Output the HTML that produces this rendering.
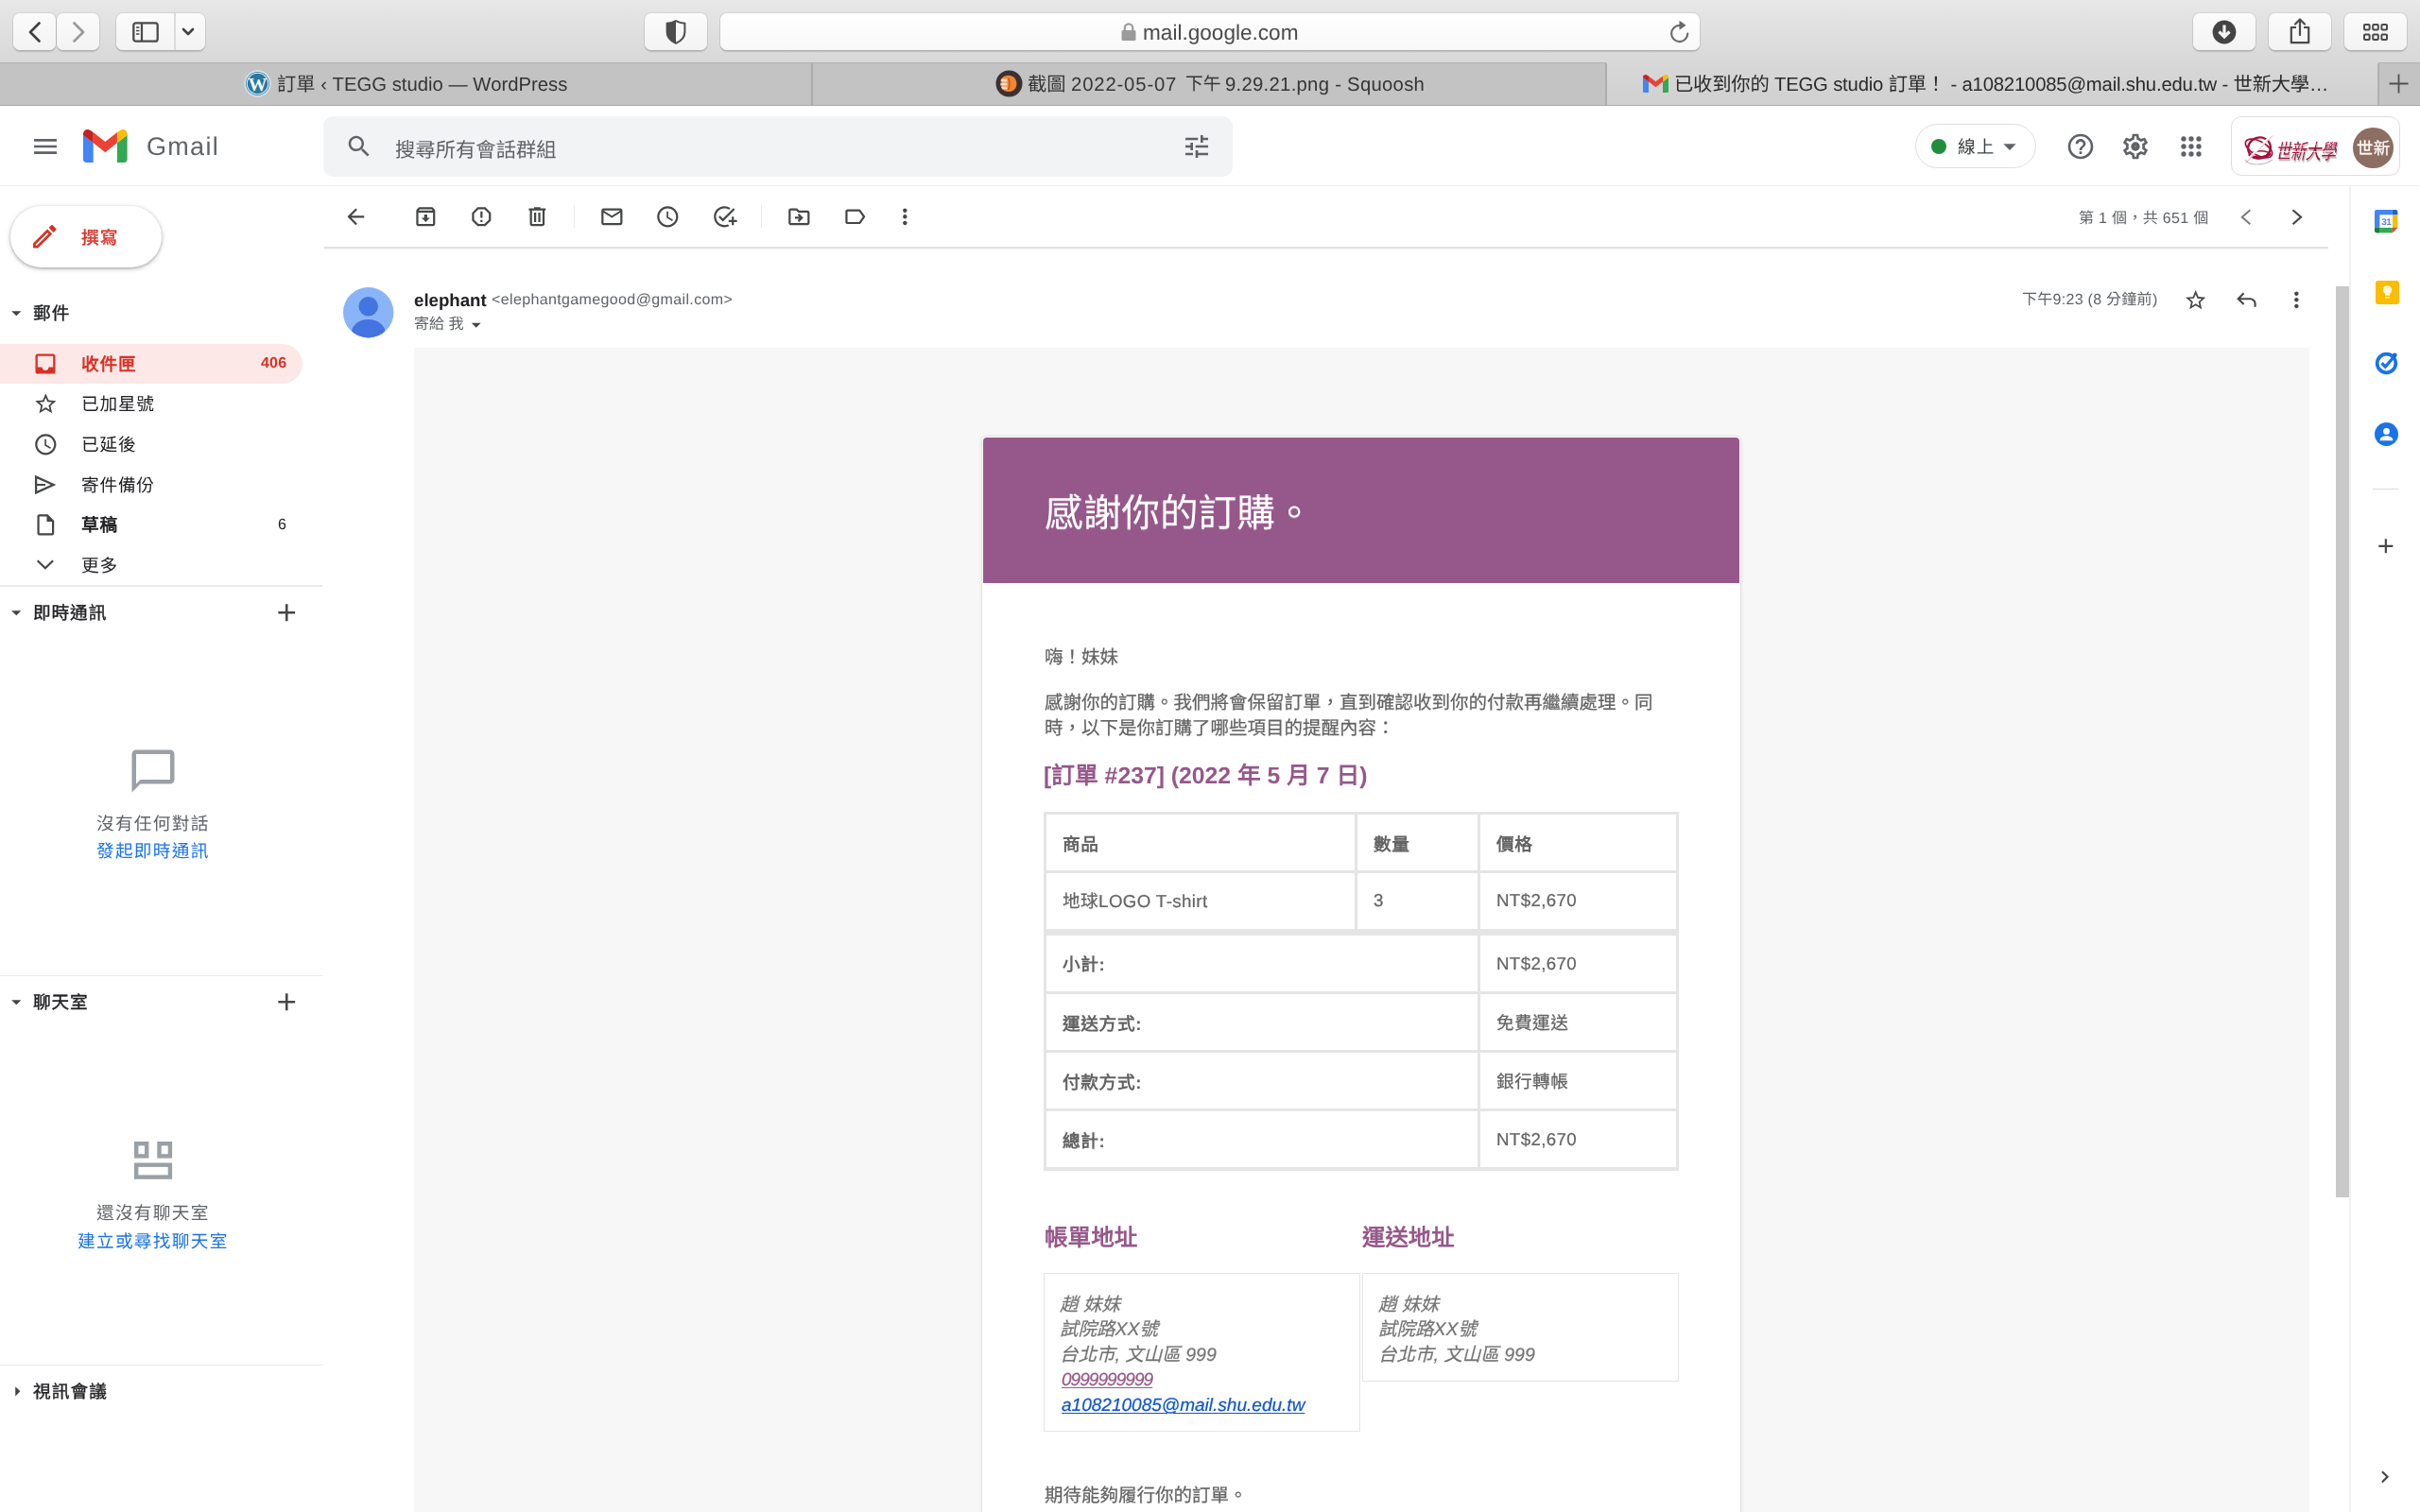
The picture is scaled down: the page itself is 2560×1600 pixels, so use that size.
<!DOCTYPE html>
<html lang="zh-TW">
<head>
<meta charset="utf-8">
<title>Gmail</title>
<style>
*{box-sizing:border-box;margin:0;padding:0}
html,body{width:2560px;height:1600px;overflow:hidden;background:#fff}
body{position:relative;font-family:"Liberation Sans",sans-serif;color:#202124;-webkit-font-smoothing:antialiased;text-rendering:geometricPrecision}
.a{position:absolute}
.t{position:absolute;white-space:nowrap;line-height:1;will-change:transform}
svg{position:absolute;display:block;overflow:visible}
/* ---------- Safari chrome ---------- */
#tb{left:0;top:0;width:2560px;height:67px;background:linear-gradient(#e9e9e9,#e4e4e4 20%,#d8d8d8)}
.btn{position:absolute;top:14px;height:39px;border-radius:7px;background:linear-gradient(#fbfbfb,#f3f3f3);box-shadow:0 0 0 1px rgba(0,0,0,.07),0 1.5px 1.5px rgba(0,0,0,.14)}
#tabs{left:0;top:66px;width:2560px;height:46px;background:#c3c3c3;border-top:1.5px solid #b3b3b3;border-bottom:1.5px solid #a9a9a9}
.tabt{font-size:20.3px;color:#353535;top:79.6px}
#tabact{left:1699px;top:66px;width:817px;height:45px;background:linear-gradient(#d8d8d8,#d0d0d0)}
</style>
</head>
<body>
<!-- ================= SAFARI TOOLBAR ================= -->
<div id="tb" class="a"></div>
<div class="btn" style="left:14px;width:45px"></div>
<div class="btn" style="left:60px;width:45px"></div>
<div class="btn" style="left:123px;width:94px"></div>
<div class="a" style="left:184px;top:14px;width:1.5px;height:39px;background:#dcdcdc"></div>
<div class="btn" style="left:682px;width:66px"></div>
<div class="btn" style="left:762px;width:1036px;background:linear-gradient(#fff,#f8f8f8)"></div>
<div class="btn" style="left:2320px;width:66px"></div>
<div class="btn" style="left:2400px;width:66px"></div>
<div class="btn" style="left:2480px;width:66px"></div>
<!-- toolbar icons -->
<svg style="left:29px;top:22px" width="16" height="24" viewBox="0 0 16 24"><path d="M12.5 2.5 3 12l9.500 9.500" fill="none" stroke="#404040" stroke-width="2.7" stroke-linecap="round" stroke-linejoin="round"/></svg>
<svg style="left:75px;top:22px" width="16" height="24" viewBox="0 0 16 24"><path d="M3.500 2.500 13 12l-9.500 9.500" fill="none" stroke="#9a9a9a" stroke-width="2.700" stroke-linecap="round" stroke-linejoin="round"/></svg>
<svg style="left:140px;top:23px" width="28" height="22" viewBox="0 0 28 22"><rect x="1.300" y="1.300" width="25.400" height="19.400" rx="2.500" fill="none" stroke="#4a4a4a" stroke-width="2.300"/><path d="M10 1.500v19" stroke="#4a4a4a" stroke-width="2.200"/><path d="M4 6h3.500M4 9.500h3.500M4 13h3.500" stroke="#4a4a4a" stroke-width="1.600"/></svg>
<svg style="left:192px;top:29px" width="14" height="10" viewBox="0 0 14 10"><path d="M2 2l5 5 5-5" fill="none" stroke="#404040" stroke-width="2.600" stroke-linecap="round" stroke-linejoin="round"/></svg>
<!-- shield -->
<svg style="left:704px;top:21px" width="22" height="26" viewBox="0 0 22 26"><path d="M11 1.200C7.500 3 4 3.600 1.600 3.800V13c0 6 4.400 9.600 9.400 11.800 5-2.200 9.400-5.800 9.400-11.800V3.800C18 3.600 14.500 3 11 1.200z" fill="none" stroke="#4d4d4d" stroke-width="2"/><path d="M11 1.200C7.500 3 4 3.600 1.600 3.800V13c0 6 4.400 9.600 9.400 11.800z" fill="#4d4d4d"/></svg>
<!-- lock + url -->
<svg style="left:1186px;top:24px" width="16" height="19" viewBox="0 0 16 19"><rect x="0.500" y="8" width="15" height="11" rx="1.500" fill="#9b9b9b"/><path d="M3.800 8.500V5.500a4.200 4.200 0 0 1 8.400 0v3" fill="none" stroke="#9b9b9b" stroke-width="2.200"/></svg>
<div class="t" style="left:1209px;top:24.3px;font-size:22.6px;color:#4a4a4a">mail.google.com</div>
<!-- reload -->
<svg style="left:1765px;top:21px" width="24" height="26" viewBox="0 0 24 26"><path d="M20.300 14.500a8.600 8.600 0 1 1-8.600-8.600" fill="none" stroke="#6a6a6a" stroke-width="2.100" stroke-linecap="round"/><path d="M11.500 0.800l7 5-7 5z" fill="#6a6a6a"/></svg>
<!-- download -->
<svg style="left:2340px;top:21px" width="26" height="26" viewBox="0 0 26 26"><circle cx="13" cy="13" r="12.400" fill="#444"/><path d="M13 5.500v12M7.500 12.500 13 18l5.500-5.500" fill="none" stroke="#f4f4f4" stroke-width="3.200" stroke-linejoin="miter"/></svg>
<!-- share -->
<svg style="left:2422px;top:19px" width="22" height="28" viewBox="0 0 22 28"><path d="M7 10H1.800v16.200h18.400V10H15" fill="none" stroke="#4a4a4a" stroke-width="2.200" stroke-linejoin="round"/><path d="M11 18V2M6 6.500l5-5 5 5" fill="none" stroke="#4a4a4a" stroke-width="2.200" stroke-linecap="round" stroke-linejoin="round"/></svg>
<!-- grid -->
<svg style="left:2500px;top:25px" width="26" height="18" viewBox="0 0 26 18"><g fill="none" stroke="#4a4a4a" stroke-width="2"><rect x="1" y="1" width="5.600" height="5.600" rx="1"/><rect x="10.200" y="1" width="5.600" height="5.600" rx="1"/><rect x="19.400" y="1" width="5.600" height="5.600" rx="1"/><rect x="1" y="11.400" width="5.600" height="5.600" rx="1"/><rect x="10.200" y="11.400" width="5.600" height="5.600" rx="1"/><rect x="19.400" y="11.400" width="5.600" height="5.600" rx="1"/></g></svg>

<!-- ================= TAB BAR ================= -->
<div id="tabs" class="a"></div>
<div class="a" style="left:858px;top:67px;width:1.500px;height:44px;background:#ababab"></div>
<div id="tabact" class="a"></div>
<div class="a" style="left:1697.500px;top:67px;width:2px;height:44px;background:#adadad"></div>
<div class="a" style="left:2515px;top:67px;width:1.500px;height:44px;background:#b0b0b0"></div>
<!-- wp icon -->
<svg style="left:257.500px;top:73.800px" width="29" height="29" viewBox="0 0 29 29"><circle cx="14.500" cy="14.500" r="14.200" fill="#d4e3ec"/><circle cx="14.500" cy="14.500" r="12.500" fill="#2a779f"/><circle cx="14.500" cy="14.500" r="11.200" fill="none" stroke="#e8f0f5" stroke-width="1.100"/><text x="14.500" y="21.800" font-family="Liberation Serif,serif" font-weight="bold" font-size="20" text-anchor="middle" fill="#f2f7fa">W</text></svg>
<div class="t tabt" style="left:293px">訂單 ‹ TEGG studio — WordPress</div>
<!-- squoosh icon -->
<svg style="left:1053px;top:74px" width="29" height="29" viewBox="0 0 29 29"><circle cx="14.500" cy="14.500" r="14" fill="#3b3033"/><path d="M7 8.500c3-3.500 11-4 14 1s1.500 12.500-5.500 13.500c-4.500.5-8-1.500-9-5z" fill="#f0862e"/><path d="M6 9.500h6.500v3H5.500zM5.500 13.500h7v3H5.200zM6 17.500h6.500v3H7z" fill="#f6d9c8"/><path d="M13.500 9c2 2 2 9 0 12" stroke="#c4561c" stroke-width="1.400" fill="none"/></svg>
<div class="t tabt" style="left:1087.200px">截圖</div><div class="t tabt" style="left:1133px;letter-spacing:.85px">2022-05-07</div><div class="t tabt" style="left:1254.200px;font-size:18.800px;top:80.300px">下午</div><div class="t tabt" style="left:1295.600px;letter-spacing:.28px">9.29.21.png - Squoosh</div>
<!-- gmail mini icon -->
<svg style="left:1738px;top:79px" width="27" height="19" viewBox="0 0 27 19"><path d="M0 3v14.500c0 .8.700 1.500 1.500 1.500H6V7.500z" fill="#4285f4"/><path d="M27 3v14.500c0 .8-.700 1.500-1.500 1.500H21V7.500z" fill="#34a853"/><path d="M21 1.500V7.500l6-4.500V2.500c0-2.300-2.600-3.300-4.200-2.100z" fill="#fbbc04"/><path d="M6 7.500V1.500l7.500 5.700L21 1.500v6l-7.500 5.700z" fill="#ea4335"/><path d="M0 2.500V3l6 4.500V1.500L4.200.400C2.600-.800 0 .200 0 2.500z" fill="#c5221f"/></svg>
<div class="t tabt" style="left:1771px;letter-spacing:-.18px;color:#2a2a2a">已收到你的 TEGG studio 訂單！ - a108210085@mail.shu.edu.tw - 世新大學…</div>
<svg style="left:2527px;top:78px" width="21" height="21" viewBox="0 0 21 21"><path d="M10.500 0.500v20M0.500 10.500h20" stroke="#505050" stroke-width="1.800"/></svg>

<!-- ================= GMAIL HEADER ================= -->
<div class="a" style="left:0.00px;top:196.00px;width:2560.00px;height:1.40px;background:#f0f0f0"></div>
<svg style="left:31.85px;top:138.85px" width="32.00" height="32.00" viewBox="0 0 24 24"><path fill="#5f6368" d="M3 18h18v-2H3v2zm0-5h18v-2H3v2zm0-7v2h18V6H3z"/></svg>
<svg style="left:87.9px;top:137.1px" width="46.6" height="34.9" viewBox="0 0 27 19.500" preserveAspectRatio="none"><path d="M0 3.200v14.500c0 1 .800 1.800 1.800 1.800H6.200V8z" fill="#4285f4"/><path d="M27 3.200v14.500c0 1-.800 1.800-1.800 1.800H20.800V8z" fill="#34a853"/><path d="M20.800 1.700V8l6.200-4.700V2.700c0-2.300-2.600-3.500-4.400-2.200z" fill="#fbbc04"/><path d="M6.200 8V1.700l7.300 5.500 7.300-5.500V8l-7.300 5.500z" fill="#ea4335"/><path d="M0 2.700v.6L6.200 8V1.700L4.400.500C2.600-.800 0 .400 0 2.700z" fill="#c5221f"/></svg>
<div class="t " style="left:154.90px;top:141.90px;font-size:27.00px;color:#5f6368;letter-spacing:1.3px">Gmail</div>
<div class="a" style="left:341.70px;top:123.20px;width:962.70px;height:63.50px;background:#f1f3f4;border-radius:10.7px"></div>
<svg style="left:365.10px;top:140.10px" width="30.00" height="30.00" viewBox="0 0 24 24"><path fill="#5f6368" d="M15.5 14h-.79l-.28-.27C15.41 12.59 16 11.11 16 9.5 16 5.91 13.09 3 9.5 3S3 5.910 3 9.500 5.910 16 9.500 16c1.610 0 3.090-.590 4.230-1.570l.27.28v.79l5 4.990L20.490 19l-4.990-5zm-6 0C7.010 14 5 11.990 5 9.500S7.010 5 9.500 5 14 7.010 14 9.500 11.990 14 9.500 14z"/></svg>
<div class="t " style="left:417.80px;top:148.90px;font-size:21.33px;color:#5f6368;">搜尋所有會話群組</div>
<svg style="left:1249.80px;top:139.00px" width="32.00" height="32.00" viewBox="0 0 24 24"><path fill="#5f6368" d="M3 17v2h6v-2H3zM3 5v2h10V5H3zm10 16v-2h8v-2h-8v-2h-2v6h2zM7 9v2H3v2h4v2h2V9H7zm14 4v-2H11v2h10zm-6-4h2V7h4V5h-4V3h-2v6z"/></svg>
<div class="a" style="left:2026.10px;top:131.00px;width:128.40px;height:47.10px;border:1.7px solid #dddee2;border-radius:24px"></div>
<div class="a" style="left:2043.40px;top:147.10px;width:16.00px;height:16.00px;background:#1e8e3e;border-radius:50%"></div>
<div class="t " style="left:2070.60px;top:147.20px;font-size:18.67px;color:#3c4043;letter-spacing:1px">線上</div>
<svg style="left:2110.40px;top:139.20px" width="32.00" height="32.00" viewBox="0 0 24 24"><path fill="#5f6368" d="M7 10l5 5 5-5z"/></svg>
<svg style="left:2184.80px;top:139.10px" width="32.00" height="32.00" viewBox="0 0 24 24"><path fill="#5f6368" d="M11 18h2v-2h-2v2zm1-16C6.480 2 2 6.480 2 12s4.480 10 10 10 10-4.480 10-10S17.520 2 12 2zm0 18c-4.410 0-8-3.590-8-8s3.590-8 8-8 8 3.590 8 8-3.590 8-8 8zm0-14c-2.210 0-4 1.790-4 4h2c0-1.100.9-2 2-2s2 .9 2 2c0 2-3 1.750-3 5h2c0-2.250 3-2.500 3-5 0-2.210-1.790-4-4-4z"/></svg>
<svg style="left:2243.20px;top:139.00px" width="32.00" height="32.00" viewBox="0 0 24 24"><path fill="#5f6368" d="M19.430 12.980c.04-.32.07-.64.07-.98 0-.34-.03-.66-.07-.98l2.110-1.650c.19-.15.24-.42.12-.64l-2-3.460c-.09-.16-.26-.25-.44-.25-.06 0-.12.01-.17.03l-2.490 1c-.52-.4-1.080-.73-1.690-.98l-.38-2.650C14.460 2.180 14.250 2 14 2h-4c-.25 0-.46.18-.49.42l-.38 2.650c-.61.25-1.170.59-1.690.98l-2.490-1c-.06-.02-.12-.03-.18-.03-.17 0-.34.09-.43.25l-2 3.460c-.13.22-.07.49.12.64l2.110 1.650c-.04.32-.07.65-.07.98 0 .33.03.66.07.98l-2.110 1.650c-.19.15-.24.42-.12.64l2 3.460c.09.16.26.25.44.25.06 0 .12-.01.17-.03l2.490-1c.52.4 1.080.73 1.690.98l.38 2.650c.03.24.24.42.49.42h4c.25 0 .46-.18.49-.42l.38-2.650c.61-.25 1.170-.59 1.690-.98l2.490 1c.06.02.12.03.18.03.17 0 .34-.09.43-.25l2-3.460c.12-.22.07-.49-.12-.64l-2.110-1.650zm-1.980-1.710c.04.31.05.52.05.73 0 .21-.02.43-.05.73l-.14 1.130.89.7 1.080.84-.7 1.210-1.270-.51-1.040-.42-.9.68c-.43.32-.84.56-1.250.73l-1.060.43-.16 1.130-.2 1.350h-1.400l-.19-1.350-.16-1.130-1.060-.43c-.43-.18-.83-.41-1.230-.71l-.91-.7-1.060.43-1.270.51-.7-1.210 1.080-.84.89-.7-.14-1.130c-.03-.31-.05-.54-.05-.74s.02-.43.05-.73l.14-1.130-.89-.7-1.080-.84.7-1.210 1.270.51 1.040.42.9-.68c.43-.32.84-.56 1.250-.73l1.060-.43.16-1.130.2-1.350h1.390l.19 1.350.16 1.130 1.060.43c.43.18.83.41 1.230.71l.91.7 1.060-.43 1.270-.51.7 1.210-1.070.85-.89.7.14 1.130z"/><circle cx="12" cy="12" r="3.500" fill="#5f6368"/><circle cx="12" cy="12" r="1" fill="#74787c"/></svg>
<svg style="left:2302.20px;top:139.00px" width="32" height="32" viewBox="0 0 24 24"><g fill="#5f6368"><circle cx="6" cy="6" r="2"/><circle cx="12" cy="6" r="2"/><circle cx="18" cy="6" r="2"/><circle cx="6" cy="12" r="2"/><circle cx="12" cy="12" r="2"/><circle cx="18" cy="12" r="2"/><circle cx="6" cy="18" r="2"/><circle cx="12" cy="18" r="2"/><circle cx="18" cy="18" r="2"/></g></svg>
<div class="a" style="left:2360.40px;top:123.10px;width:178.40px;height:62.90px;border:1.8px solid #dddee2;border-radius:11px"></div>
<svg style="left:2372px;top:138px" width="104" height="40" viewBox="0 0 104 40"><g fill="none" stroke="#a5123d" stroke-linecap="round"><ellipse cx="18" cy="18.500" rx="12" ry="11" stroke-width="2.300" transform="rotate(-18 18 18.500)"/><ellipse cx="17.500" cy="19" rx="15.500" ry="7.500" stroke-width="1.700" transform="rotate(28 17.500 19)"/><path d="M8 26c5 4 15 4 21-1" stroke-width="3.200"/><path d="M10 24c4-2 11-3 17-1" stroke-width="1.600"/></g><path d="M4 33 31 5" stroke="#fff" stroke-width="2.600"/><path d="M3.500 34.500 32 5.500" stroke="#e3a6b8" stroke-width="1" fill="none"/><path d="M3 31c2 3 7 5 12 5s12-1 17-5" stroke="#bdbdbd" stroke-width="1.200" fill="none"/><g font-family="Liberation Sans,sans-serif" font-weight="normal" font-size="16.500" transform="translate(35 30) skewX(-12) scale(1 1.320)"><text x="1.200" y="1.600" fill="#b9b9b9" textLength="64">世新大學</text><text x="0" y="0" fill="#a5123d" textLength="64">世新大學</text></g><path d="M36 22.500h62" stroke="#fff" stroke-width=".9" opacity=".75"/><path d="M40 17l54-3" stroke="#fff" stroke-width=".8" opacity=".6"/></svg>
<div class="a" style="left:2489.20px;top:135.20px;width:42.40px;height:42.40px;background:#8d6e63;border-radius:50%"></div>
<div class="t " style="left:2492.60px;top:148.50px;font-size:17.40px;color:#fdf8f4;letter-spacing:.3px;-webkit-text-stroke:.3px">世新</div>
<!-- ================= SIDEBAR ================= -->
<div class="a" style="left:10.50px;top:217.60px;width:160.50px;height:65.00px;background:#fff;border-radius:33px;box-shadow:0 1.300px 2.700px rgba(60,64,67,.32),0 1.300px 4px 1.300px rgba(60,64,67,.16)"></div>
<svg style="left:31.45px;top:234.30px" width="32.60" height="32.60" viewBox="0 0 24 24"><path fill="#d93025" d="M14.060 9.020l.92.92L5.920 19H5v-.92l9.060-9.060M17.660 3c-.25 0-.51.1-.7.29l-1.830 1.830 3.750 3.750 1.830-1.830c.39-.39.39-1.020 0-1.410l-2.340-2.340c-.2-.2-.45-.29-.71-.29zm-3.600 3.190L3 17.250V21h3.750L17.810 9.940l-3.750-3.750z"/></svg>
<div class="t " style="left:86.00px;top:242.70px;font-size:18.67px;color:#d93025;font-weight:500;-webkit-text-stroke:.38px;letter-spacing:1px">撰寫</div>
<svg style="left:5.25px;top:319.10px" width="24.60" height="24.60" viewBox="0 0 24 24"><path fill="#444" d="M7 10l5 5 5-5z"/></svg>
<div class="t " style="left:35.00px;top:322.60px;font-size:18.67px;color:#202124;font-weight:500;-webkit-text-stroke:.38px;letter-spacing:1.050px">郵件</div>
<div class="a" style="left:0.00px;top:363.60px;width:320.00px;height:42.40px;background:#fce8e6;border-radius:0 21.200px 21.200px 0"></div>
<svg style="left:34.10px;top:370.80px" width="28.00" height="28.00" viewBox="0 0 24 24"><path fill="#d93025" d="M19 3H4.990c-1.110 0-1.980.89-1.980 2L3 19c0 1.100.88 2 1.990 2H19c1.100 0 2-.9 2-2V5c0-1.110-.9-2-2-2zm0 12h-4c0 1.660-1.350 3-3 3s-3-1.340-3-3H4.990V5H19v10z"/></svg>
<div class="t " style="left:85.80px;top:376.50px;font-size:18.67px;color:#d93025;font-weight:bold;letter-spacing:.8px">收件匣</div>
<svg style="left:34.77px;top:414.17px" width="26.67" height="26.67" viewBox="0 0 24 24"><path fill="#444746" d="M22 9.240l-7.190-.62L12 2 9.190 8.630 2 9.240l5.460 4.730L5.820 21 12 17.270 18.180 21l-1.630-7.030L22 9.240zM12 15.400l-3.760 2.270 1-4.280-3.320-2.880 4.380-.38L12 6.100l1.710 4.040 4.380.38-3.320 2.880 1 4.280L12 15.400z"/></svg>
<div class="t " style="left:85.80px;top:419.20px;font-size:18.67px;color:#202124;font-weight:normal;letter-spacing:.8px">已加星號</div>
<svg style="left:34.77px;top:456.77px" width="26.67" height="26.67" viewBox="0 0 24 24"><path fill="#444746" d="M11.990 2C6.470 2 2 6.480 2 12s4.470 10 9.990 10C17.520 22 22 17.520 22 12S17.520 2 11.990 2zM12 20c-4.420 0-8-3.580-8-8s3.580-8 8-8 8 3.580 8 8-3.580 8-8 8zm.5-13H11v6l5.250 3.150.75-1.230-4.500-2.670z"/></svg>
<div class="t " style="left:85.80px;top:461.80px;font-size:18.67px;color:#202124;font-weight:normal;letter-spacing:.8px">已延後</div>
<svg style="left:35px;top:500.80px" width="26" height="24" viewBox="0 0 26 24"><path d="M3.100 3.600 21.600 12 3.100 20.400Z" fill="none" stroke="#444746" stroke-width="2.300" stroke-linejoin="miter"/><path d="M3 12h10" stroke="#444746" stroke-width="2.100"/></svg>
<div class="t " style="left:85.80px;top:504.50px;font-size:18.67px;color:#202124;font-weight:normal;letter-spacing:.8px">寄件備份</div>
<svg style="left:34.77px;top:542.16px" width="26.67" height="26.67" viewBox="0 0 24 24"><path fill="#444746" d="M14 2H6c-1.100 0-1.990.9-1.990 2L4 20c0 1.100.89 2 1.990 2H18c1.100 0 2-.9 2-2V8l-6-6zM6 20V4h7v5h5v11H6z"/></svg>
<div class="t " style="left:85.80px;top:547.20px;font-size:18.67px;color:#202124;font-weight:bold;letter-spacing:.8px">草稿</div>
<svg style="left:35px;top:590.10px" width="26" height="16" viewBox="0 0 26 16"><path d="M4.700 3.200 12.900 11.300 21.100 3.200" fill="none" stroke="#444746" stroke-width="2.200"/></svg>
<div class="t " style="left:85.80px;top:589.80px;font-size:18.67px;color:#202124;font-weight:normal;letter-spacing:.8px">更多</div>
<div class="t" style="right:2256.40px;top:376.80px;font-size:16px;color:#d93025;font-weight:bold;letter-spacing:.2px">406</div>
<div class="t" style="right:2257.00px;top:547.50px;font-size:16px;color:#202124">6</div>
<div class="a" style="left:0.00px;top:619.00px;width:340.70px;height:1.80px;background:#ebebeb"></div>
<div class="a" style="left:0.00px;top:1032.00px;width:341.70px;height:1.40px;background:#ececec"></div>
<div class="a" style="left:0.00px;top:1443.80px;width:341.70px;height:1.40px;background:#ececec"></div>
<svg style="left:5.25px;top:636.10px" width="24.60" height="24.60" viewBox="0 0 24 24"><path fill="#444" d="M7 10l5 5 5-5z"/></svg>
<div class="t " style="left:35.20px;top:639.90px;font-size:18.67px;color:#202124;font-weight:500;-webkit-text-stroke:.38px;letter-spacing:.9px">即時通訊</div>
<svg style="left:287.85px;top:632.85px" width="30.50" height="30.50" viewBox="0 0 24 24"><path fill="#444746" d="M19 13h-6v6h-2v-6H5v-2h6V5h2v6h6v2z"/></svg>
<svg style="left:134.90px;top:788.60px" width="54.00" height="54.00" viewBox="0 0 24 24"><path fill="#9aa0a6" d="M20 2H4c-1.100 0-2 .9-2 2v18l4-4h14c1.100 0 2-.9 2-2V4c0-1.100-.9-2-2-2zm0 14H6l-2 2V4h16v12z"/></svg>
<div class="t" style="left:0;width:322.6px;text-align:center;top:863px;font-size:18.67px;color:#5f6368;letter-spacing:1.3px;text-indent:1px">沒有任何對話</div>
<div class="t" style="left:0;width:322.6px;text-align:center;top:892px;font-size:18.67px;color:#1a73e8;letter-spacing:1.3px;text-indent:1px">發起即時通訊</div>
<svg style="left:5.25px;top:1048.10px" width="24.60" height="24.60" viewBox="0 0 24 24"><path fill="#444" d="M7 10l5 5 5-5z"/></svg>
<div class="t " style="left:35.30px;top:1051.90px;font-size:18.67px;color:#202124;font-weight:500;-webkit-text-stroke:.38px;letter-spacing:.9px">聊天室</div>
<svg style="left:287.85px;top:1044.85px" width="30.50" height="30.50" viewBox="0 0 24 24"><path fill="#444746" d="M19 13h-6v6h-2v-6H5v-2h6V5h2v6h6v2z"/></svg>
<svg style="left:141.6px;top:1208.3px" width="40.1" height="39.8" viewBox="0 0 40.100 39.800"><g fill="none" stroke="#9aa0a6" stroke-width="4.400"><rect x="2.200" y="2.200" width="11" height="13.200"/><rect x="26.500" y="2.200" width="11.400" height="13.200"/><rect x="2.200" y="24.700" width="35.700" height="12.900"/></g></svg>
<div class="t" style="left:0;width:322.6px;text-align:center;top:1275.4px;font-size:18.67px;color:#5f6368;letter-spacing:1.3px;text-indent:1px">還沒有聊天室</div>
<div class="t" style="left:0;width:322.6px;text-align:center;top:1304.9px;font-size:18.67px;color:#1a73e8;letter-spacing:1.3px;text-indent:1px">建立或尋找聊天室</div>
<svg style="left:6.30px;top:1459.70px" width="24.60" height="24.60" viewBox="0 0 24 24"><path fill="#444" d="M10 7l5 5-5 5z"/></svg>
<div class="t " style="left:35.30px;top:1463.70px;font-size:18.67px;color:#202124;font-weight:500;-webkit-text-stroke:.38px;letter-spacing:1.1px">視訊會議</div>
<!-- ================= MAIL TOOLBAR ================= -->
<svg style="left:362.97px;top:216.16px" width="26.67" height="26.67" viewBox="0 0 24 24"><path fill="#444746" d="M20 11H7.830l5.590-5.590L12 4l-8 8 8 8 1.410-1.410L7.830 13H20v-2z"/></svg>
<svg style="left:437.06px;top:216.16px" width="26.67" height="26.67" viewBox="0 0 24 24"><path fill="#444746" d="M20.540 5.230l-1.390-1.680C18.880 3.210 18.470 3 18 3H6c-.47 0-.88.21-1.160.55L3.460 5.230C3.170 5.570 3 6.020 3 6.500V19c0 1.100.9 2 2 2h14c1.100 0 2-.9 2-2V6.500c0-.48-.17-.93-.46-1.270zM6.240 5h11.520l.81.97H5.440l.8-.97zM5 19V8h14v11H5zm8.450-9h-2.900v3H8l4 4 4-4h-2.550z"/></svg>
<svg style="left:495.67px;top:216.16px" width="26.67" height="26.67" viewBox="0 0 24 24"><path fill="#444746" d="M15.730 3H8.270L3 8.270v7.460L8.270 21h7.460L21 15.730V8.270L15.730 3zM19 14.900L14.900 19H9.100L5 14.900V9.100L9.100 5h5.800L19 9.100v5.800zM11 7h2v6h-2zM11 15h2v2h-2z"/></svg>
<svg style="left:554.66px;top:216.16px" width="26.67" height="26.67" viewBox="0 0 24 24"><path fill="#444746" d="M15 4V3H9v1H4v2h1v13c0 1.100.9 2 2 2h10c1.100 0 2-.9 2-2V6h1V4h-5zm2 15H7V6h10v13zM9 8h2v9H9zm4 0h2v9h-2z"/></svg>
<svg style="left:634.26px;top:216.16px" width="26.67" height="26.67" viewBox="0 0 24 24"><path fill="#444746" d="M20 4H4c-1.100 0-1.990.9-1.990 2L2 18c0 1.100.9 2 2 2h16c1.100 0 2-.9 2-2V6c0-1.100-.9-2-2-2zm0 14H4V8l8 5 8-5v10zm-8-7L4 6h16l-8 5z"/></svg>
<svg style="left:693.46px;top:216.16px" width="26.67" height="26.67" viewBox="0 0 24 24"><path fill="#444746" d="M11.990 2C6.470 2 2 6.480 2 12s4.470 10 9.990 10C17.520 22 22 17.520 22 12S17.520 2 11.990 2zM12 20c-4.420 0-8-3.580-8-8s3.580-8 8-8 8 3.580 8 8-3.580 8-8 8zm.5-13H11v6l5.250 3.150.75-1.230-4.500-2.670z"/></svg>
<svg style="left:753.16px;top:216.16px" width="26.67" height="26.67" viewBox="0 0 24 24"><path fill="#444746" d="M22 5.180L10.590 16.600l-4.240-4.240 1.410-1.410 2.830 2.830 10-10L22 5.180zM12 20c-4.410 0-8-3.590-8-8s3.590-8 8-8c1.570 0 3.040.46 4.280 1.250l1.450-1.450C16.100 2.670 14.130 2 12 2 6.480 2 2 6.480 2 12s4.480 10 10 10c1.730 0 3.360-.44 4.780-1.220l-1.500-1.500c-1 .46-2.110.72-3.280.72zm7-5h-3v2h3v3h2v-3h3v-2h-3v-3h-2v3z"/></svg>
<svg style="left:831.66px;top:216.16px" width="26.67" height="26.67" viewBox="0 0 24 24"><path fill="#444746" d="M20 6h-8l-2-2H4c-1.100 0-2 .9-2 2v12c0 1.100.9 2 2 2h16c1.100 0 2-.9 2-2V8c0-1.100-.9-2-2-2zm0 12H4V6h5.170l2 2H20v10zm-7.840-4H8v-2h4.160l-1.590-1.590L11.990 9 16 13.010 11.990 17l-1.410-1.410L12.160 14z"/></svg>
<svg style="left:890.66px;top:216.16px" width="26.67" height="26.67" viewBox="0 0 24 24"><path fill="#444746" d="M17.630 5.840C17.270 5.330 16.670 5 16 5L5 5.010C3.900 5.010 3 5.900 3 7v10c0 1.100.9 1.990 2 1.990L16 19c.67 0 1.270-.33 1.630-.84L22 12l-4.370-6.160zM16 17H5V7h11l3.550 5L16 17z"/></svg>
<svg style="left:943.66px;top:216.16px" width="26.67" height="26.67" viewBox="0 0 24 24"><path fill="#444746" d="M12 8c1.100 0 2-.9 2-2s-.9-2-2-2-2 .9-2 2 .9 2 2 2zm0 2c-1.100 0-2 .9-2 2s.9 2 2 2 2-.9 2-2-.9-2-2-2zm0 6c-1.100 0-2 .9-2 2s.9 2 2 2 2-.9 2-2-.9-2-2-2z"/></svg>
<div class="a" style="left:606.50px;top:217.30px;width:1.40px;height:23.50px;background:#ececec"></div>
<div class="a" style="left:804.50px;top:217.30px;width:1.40px;height:23.50px;background:#ececec"></div>
<div class="a" style="left:343.00px;top:261.00px;width:2120.00px;height:1.60px;background:#e2e2e2;box-shadow:0 1px 1.500px rgba(0,0,0,.06)"></div>
<div class="t " style="left:2198.90px;top:223.80px;font-size:16.00px;color:#5f6368;letter-spacing:.32px">第 1 個，共 651 個</div>
<svg style="left:2364px;top:217px" width="80" height="26" viewBox="0 0 80 26"><path d="M16.300 5.200 7.800 12.700 16.300 20.200" fill="none" stroke="#7b7b7b" stroke-width="2"/><path d="M61.500 5.200 70 12.700 61.500 20.200" fill="none" stroke="#444746" stroke-width="2.200"/></svg>
<!-- ================= RIGHT SIDE PANEL ================= -->
<div class="a" style="left:2485.20px;top:197.40px;width:1.80px;height:1403.00px;background:#f1f1f1"></div>
<div class="a" style="left:2470.60px;top:302.70px;width:14.60px;height:964.30px;background:#c9c9c9"></div>
<svg style="left:2512px;top:222.4px" width="24.400" height="24.400" viewBox="0 0 24 24"><path d="M0 2a2 2 0 0 1 2-2h16.500V5.500H5.500V18.500H0z" fill="#4285f4"/><path d="M18.500 0H22a2 2 0 0 1 2 2v3.500H18.500z" fill="#1967d2"/><path d="M18.500 5.500H24v13H18.500z" fill="#fbbc04"/><path d="M5.500 18.500H18.500V24H5.500z" fill="#34a853"/><path d="M0 18.500H5.500V24H2a2 2 0 0 1-2-2z" fill="#188038"/><path d="M18.500 18.500H24L18.500 24z" fill="#ea4335"/><rect x="5.500" y="5.500" width="13" height="13" fill="#fff"/><text x="12" y="15.600" font-family="Liberation Sans,sans-serif" font-size="9.500" font-weight="bold" text-anchor="middle" fill="#4f86ec" letter-spacing="-.5">31</text></svg>
<svg style="left:2512.500px;top:296.800px" width="25" height="25" viewBox="0 0 25 25"><rect width="25" height="25" rx="2.500" fill="#fbbc04"/><path d="M12.500 5.200a4.600 4.600 0 0 0-2.500 8.500v2h5v-2a4.600 4.600 0 0 0-2.500-8.500z" fill="#fef7e0"/><rect x="10" y="17" width="5" height="1.700" fill="#fde293"/></svg>
<svg style="left:2511.500px;top:370.600px" width="26" height="26" viewBox="0 0 26 26"><circle cx="12.500" cy="13.500" r="9.800" fill="none" stroke="#1a73e8" stroke-width="3.700"/><path d="M7.500 13.200l3.800 3.800 9.700-11" fill="none" stroke="#1a73e8" stroke-width="3.400"/><circle cx="21.300" cy="4.800" r="2.400" fill="#1967d2"/></svg>
<svg style="left:2511.700px;top:446.700px" width="25" height="25" viewBox="0 0 24 24"><circle cx="12" cy="12" r="12" fill="#1a73e8"/><circle cx="12" cy="9" r="3.300" fill="#fff"/><path d="M5.500 17.600c0-2.700 4.300-4 6.500-4s6.500 1.300 6.500 4v.9h-13z" fill="#fff"/></svg>
<div class="a" style="left:2510.30px;top:516.90px;width:26.40px;height:1.40px;background:#dcdcdc"></div>
<svg style="left:2511.15px;top:564.95px" width="25.70" height="25.70" viewBox="0 0 24 24"><path fill="#444746" d="M19 13h-6v6h-2v-6H5v-2h6V5h2v6h6v2z"/></svg>
<svg style="left:2509.70px;top:1550.40px" width="25.60" height="25.60" viewBox="0 0 24 24"><path fill="#444746" d="M10 6L8.590 7.410 13.170 12l-4.580 4.590L10 18l6-6z"/></svg>
<!-- ================= MESSAGE HEADER ================= -->
<svg style="left:362.500px;top:303.800px" width="53.400" height="53.400" viewBox="0 0 40 40"><defs><clipPath id="avc"><circle cx="20" cy="20" r="20"/></clipPath></defs><circle cx="20" cy="20" r="20" fill="#8ab4f8"/><g clip-path="url(#avc)" fill="#4374e0"><circle cx="20" cy="15.200" r="7.700"/><ellipse cx="20" cy="36" rx="13.300" ry="10.600"/></g></svg>
<div class="t " style="left:437.60px;top:308.50px;font-size:18.67px;color:#202124;font-weight:bold">elephant</div>
<div class="t " style="left:519.60px;top:310.30px;font-size:16.00px;color:#5f6368;letter-spacing:.37px">&lt;elephantgamegood@gmail.com&gt;</div>
<div class="t " style="left:437.90px;top:336.10px;font-size:16.00px;color:#5f6368;letter-spacing:0">寄給 我</div>
<svg style="left:492.35px;top:331.75px" width="23.50" height="23.50" viewBox="0 0 24 24"><path fill="#444746" d="M7 10l5 5 5-5z"/></svg>
<div class="t " style="left:2138.90px;top:309.50px;font-size:16.00px;color:#5f6368;letter-spacing:.28px">下午9:23 (8 分鐘前)</div>
<svg style="left:2310.00px;top:304.70px" width="25.40" height="25.40" viewBox="0 0 24 24"><path fill="#444746" d="M22 9.240l-7.190-.62L12 2 9.190 8.630 2 9.240l5.460 4.730L5.820 21 12 17.270 18.180 21l-1.630-7.030L22 9.240zM12 15.400l-3.760 2.270 1-4.280-3.320-2.880 4.380-.38L12 6.100l1.710 4.040 4.380.38-3.320 2.880 1 4.280L12 15.400z"/></svg>
<svg style="left:2360px;top:304px" width="32" height="26" viewBox="0 0 32 26"><path d="M13.600 6.300 7.700 12.200 13.600 18.100M8 12.200H20.300a5.300 5.300 0 0 1 5.300 5.300V20.700" fill="none" stroke="#444746" stroke-width="2.100"/></svg>
<svg style="left:2415.86px;top:304.17px" width="26.67" height="26.67" viewBox="0 0 24 24"><path fill="#444746" d="M12 8c1.100 0 2-.9 2-2s-.9-2-2-2-2 .9-2 2 .9 2 2 2zm0 2c-1.100 0-2 .9-2 2s.9 2 2 2 2-.9 2-2-.9-2-2-2zm0 6c-1.100 0-2 .9-2 2s.9 2 2 2 2-.9 2-2-.9-2-2-2z"/></svg>
<!-- ================= MESSAGE BODY ================= -->
<div class="a" style="left:437.90px;top:368.00px;width:2004.80px;height:1240.00px;background:#f7f7f7"></div>
<div class="a" style="left:1038.20px;top:461.20px;width:803.80px;height:1150.00px;background:#fff;border:1.9px solid #e1e1e1;border-radius:5px;box-shadow:0 1.300px 5px rgba(0,0,0,.06)"></div>
<div class="a" style="left:1040.10px;top:463.00px;width:800.00px;height:154.40px;background:#96588a;border-radius:4px 4px 0 0"></div>
<div class="t " style="left:1104.80px;top:523.40px;font-size:40.65px;color:#fff;font-weight:300;text-shadow:0 1.300px 0 #ab79a1">感謝你的訂購。</div>
<div class="t " style="left:1104.80px;top:687.44px;font-size:19.50px;color:#636363;;-webkit-text-stroke:.22px">嗨！妹妹</div>
<div class="t " style="left:1104.80px;top:735.03px;font-size:19.50px;color:#636363;;-webkit-text-stroke:.22px">感謝你的訂購。我們將會保留訂單，直到確認收到你的付款再繼續處理。同</div>
<div class="t " style="left:1104.80px;top:761.84px;font-size:19.50px;color:#636363;;-webkit-text-stroke:.22px">時，以下是你訂購了哪些項目的提醒內容：</div>
<div class="t " style="left:1103.80px;top:809.77px;font-size:24.75px;color:#96588a;font-weight:bold">[訂單 #237] (2022 年 5 月 7 日)</div>
<div class="a" style="left:1104.20px;top:858.80px;width:671.80px;height:3.20px;background:#e5e5e5"></div>
<div class="a" style="left:1104.20px;top:921.00px;width:671.80px;height:3.20px;background:#e5e5e5"></div>
<div class="a" style="left:1104.20px;top:982.90px;width:671.80px;height:7.30px;background:#e5e5e5"></div>
<div class="a" style="left:1104.20px;top:1049.40px;width:671.80px;height:3.00px;background:#e5e5e5"></div>
<div class="a" style="left:1104.20px;top:1111.40px;width:671.80px;height:3.00px;background:#e5e5e5"></div>
<div class="a" style="left:1104.20px;top:1173.40px;width:671.80px;height:3.00px;background:#e5e5e5"></div>
<div class="a" style="left:1104.20px;top:1235.40px;width:671.80px;height:3.40px;background:#e5e5e5"></div>
<div class="a" style="left:1104.20px;top:858.80px;width:3.00px;height:380.00px;background:#e5e5e5"></div>
<div class="a" style="left:1773.00px;top:858.80px;width:3.00px;height:380.00px;background:#e5e5e5"></div>
<div class="a" style="left:1433.10px;top:858.80px;width:3.20px;height:125.20px;background:#e5e5e5"></div>
<div class="a" style="left:1563.10px;top:858.80px;width:3.20px;height:380.00px;background:#e5e5e5"></div>
<div class="t " style="left:1123.60px;top:885.03px;font-size:18.67px;color:#636363;font-weight:bold;letter-spacing:.65px">商品</div>
<div class="t " style="left:1452.80px;top:885.03px;font-size:18.67px;color:#636363;font-weight:bold;letter-spacing:.65px">數量</div>
<div class="t " style="left:1582.80px;top:885.03px;font-size:18.67px;color:#636363;font-weight:bold;letter-spacing:.65px">價格</div>
<div class="t " style="left:1123.60px;top:944.73px;font-size:18.67px;color:#636363;letter-spacing:.4px;-webkit-text-stroke:.22px">地球LOGO T-shirt</div>
<div class="t " style="left:1452.80px;top:943.83px;font-size:18.67px;color:#636363;letter-spacing:.4px;-webkit-text-stroke:.22px">3</div>
<div class="t " style="left:1582.80px;top:943.83px;font-size:18.67px;color:#636363;letter-spacing:.4px;-webkit-text-stroke:.22px">NT$2,670</div>
<div class="t " style="left:1123.60px;top:1012.43px;font-size:18.67px;color:#636363;font-weight:bold;letter-spacing:.65px">小計:</div>
<div class="t " style="left:1582.80px;top:1010.93px;font-size:18.67px;color:#636363;letter-spacing:.4px;-webkit-text-stroke:.22px">NT$2,670</div>
<div class="t " style="left:1123.60px;top:1074.93px;font-size:18.67px;color:#636363;font-weight:bold;letter-spacing:.65px">運送方式:</div>
<div class="t " style="left:1582.80px;top:1074.33px;font-size:18.67px;color:#636363;letter-spacing:.4px;-webkit-text-stroke:.22px">免費運送</div>
<div class="t " style="left:1123.60px;top:1136.83px;font-size:18.67px;color:#636363;font-weight:bold;letter-spacing:.65px">付款方式:</div>
<div class="t " style="left:1582.80px;top:1136.23px;font-size:18.67px;color:#636363;letter-spacing:.4px;-webkit-text-stroke:.22px">銀行轉帳</div>
<div class="t " style="left:1123.60px;top:1198.93px;font-size:18.67px;color:#636363;font-weight:bold;letter-spacing:.65px">總計:</div>
<div class="t " style="left:1582.80px;top:1197.43px;font-size:18.67px;color:#636363;letter-spacing:.4px;-webkit-text-stroke:.22px">NT$2,670</div>
<div class="t " style="left:1104.50px;top:1298.74px;font-size:24.60px;color:#96588a;font-weight:bold">帳單地址</div>
<div class="t " style="left:1441.30px;top:1298.83px;font-size:24.40px;color:#96588a;font-weight:bold">運送地址</div>
<div class="a" style="left:1104.30px;top:1347.00px;width:335.00px;height:168.00px;border:1.400px solid #e5e5e5"></div>
<div class="a" style="left:1440.50px;top:1347.00px;width:335.00px;height:114.50px;border:1.400px solid #e5e5e5"></div>
<div class="t " style="left:1121.40px;top:1371.94px;font-size:19.50px;color:#747474;font-style:italic;-webkit-text-stroke:.22px">趙 妹妹</div>
<div class="t " style="left:1121.40px;top:1398.44px;font-size:19.50px;color:#747474;font-style:italic;-webkit-text-stroke:.22px">試院路XX號</div>
<div class="t " style="left:1121.40px;top:1425.44px;font-size:19.50px;color:#747474;font-style:italic;-webkit-text-stroke:.22px">台北市, 文山區 999</div>
<div class="t " style="left:1458.00px;top:1371.94px;font-size:19.50px;color:#747474;font-style:italic;-webkit-text-stroke:.22px">趙 妹妹</div>
<div class="t " style="left:1458.00px;top:1398.44px;font-size:19.50px;color:#747474;font-style:italic;-webkit-text-stroke:.22px">試院路XX號</div>
<div class="t " style="left:1458.00px;top:1425.44px;font-size:19.50px;color:#747474;font-style:italic;-webkit-text-stroke:.22px">台北市, 文山區 999</div>
<div class="t " style="left:1122.60px;top:1450.57px;font-size:19.00px;color:#96588a;font-style:italic;letter-spacing:-.95px;text-decoration:underline;text-underline-offset:1.500px;text-decoration-thickness:1.300px;-webkit-text-stroke:.22px">0999999999</div>
<div class="t " style="left:1122.60px;top:1477.55px;font-size:19.05px;color:#1155cc;font-style:italic;text-decoration:underline;text-underline-offset:1.500px;text-decoration-thickness:1.300px;-webkit-text-stroke:.22px">a108210085@mail.shu.edu.tw</div>
<div class="t " style="left:1104.70px;top:1574.24px;font-size:19.50px;color:#636363;;-webkit-text-stroke:.22px">期待能夠履行你的訂單。</div>
</body>
</html>
